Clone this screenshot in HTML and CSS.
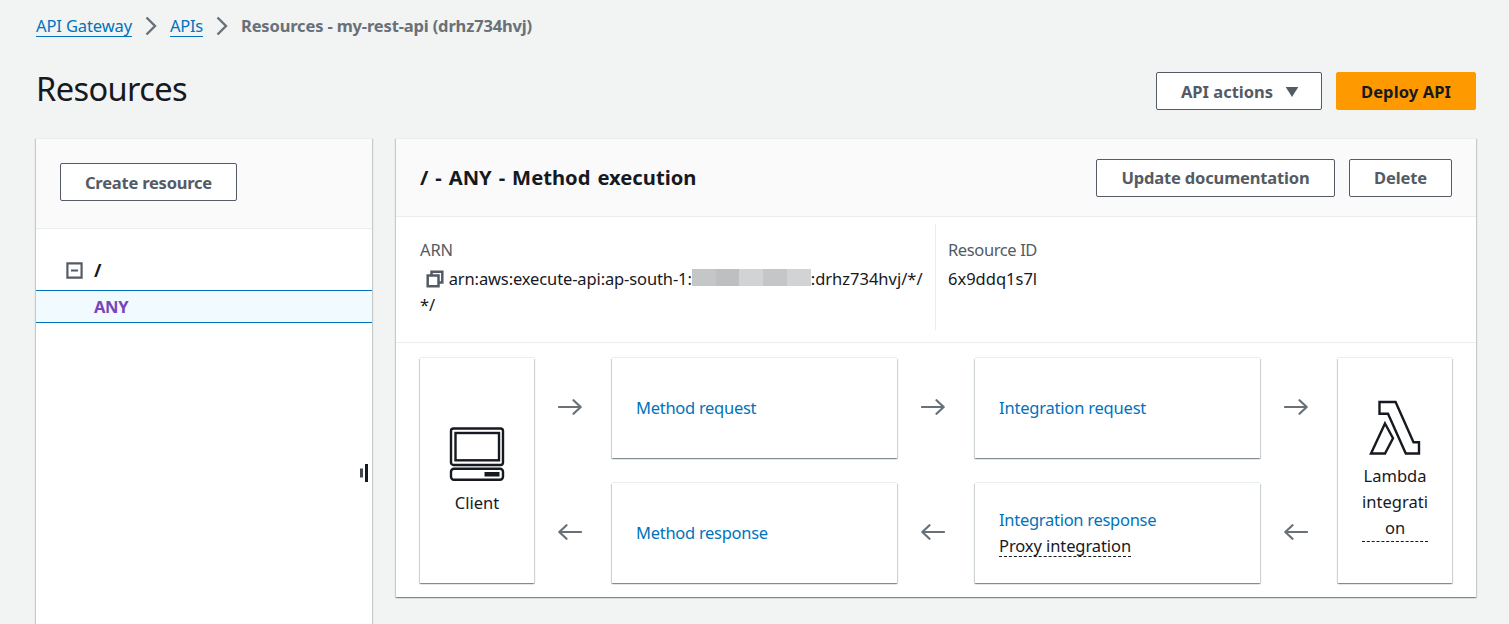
FILE: index.html
```
<!DOCTYPE html>
<html lang="en">
<head>
<meta charset="utf-8">
<title>Resources</title>
<link rel="stylesheet" href="styles.css">
</head>
<body>
<nav class="breadcrumbs">
  <a class="crumb">API Gateway</a>
  <svg class="chevron" viewBox="0 0 12 20"><path d="M1.5 1.5 10 10 1.5 18.5"/></svg>
  <a class="crumb crumb-apis">APIs</a>
  <svg class="chevron chevron-last" viewBox="0 0 12 20"><path d="M1.5 1.5 10 10 1.5 18.5"/></svg>
  <span class="crumb-current">Resources - my-rest-api (drhz734hvj)</span>
</nav>
<header class="page-header">
  <h1>Resources</h1>
  <div class="actions">
    <button class="btn btn-menu">API actions<svg class="caret" viewBox="0 0 14 12"><path d="M.7 1H13.3L7 11Z"/></svg></button>
    <button class="btn btn-primary">Deploy API</button>
  </div>
</header>
<main class="columns">
  <aside class="panel sidebar">
    <div class="sidebar-header"><button class="btn btn-create">Create resource</button></div>
    <div class="tree">
      <div class="tree-root">
        <svg class="toggle" viewBox="0 0 18 18"><path d="M1.5 1.5h15v15h-15zM5.3 9h7.4"/></svg>
        <span class="root-name">/</span>
      </div>
      <div class="tree-item">ANY</div>
    </div>
    <svg class="resizer" viewBox="0 0 8 18"><path class="grip-short" d="M1.5 4.5v9"/><path d="M6.5 0v18"/></svg>
  </aside>
  <section class="panel content">
    <div class="content-header">
      <h2>/ - ANY - Method execution</h2>
      <div class="actions">
        <button class="btn btn-update">Update documentation</button>
        <button class="btn btn-delete">Delete</button>
      </div>
    </div>
    <div class="details">
      <div class="detail detail-arn">
        <div class="label">ARN</div>
        <div class="arn-line"><svg class="copy" viewBox="0 0 18 18"><path d="M1.7 5.5h10.8v10.8h-10.8zM5.5 5V1.7h10.8v10.8H13"/></svg><span class="arn-prefix">arn:aws:execute-api:ap-south-1:</span><span class="redacted"><i></i><i></i><i></i><i></i><i></i></span><span class="arn-suffix">:drhz734hvj/*/</span></div>
        <div>*/</div>
      </div>
      <div class="detail">
        <div class="label label-id">Resource ID</div>
        <div class="resource-id">6x9ddq1s7l</div>
      </div>
    </div>
    <div class="flow">
      <div class="card endpoint">
        <svg class="client-icon" viewBox="0 0 56 54"><rect x="2" y="1.5" width="52" height="36.5" rx="2.5"/><rect x="6.5" y="6" width="43.5" height="27.3"/><rect x="2" y="41.7" width="52" height="11" rx="3"/><path class="solid" d="M35.5 45h15v4.5h-15z"/></svg>
        <span>Client</span>
      </div>
      <svg class="arrow" viewBox="0 0 24 16"><path d="M1 8h21.5M15.5 1.2 22.7 8l-7.2 6.8"/></svg>
      <div class="card step"><a>Method request</a></div>
      <svg class="arrow" viewBox="0 0 24 16"><path d="M1 8h21.5M15.5 1.2 22.7 8l-7.2 6.8"/></svg>
      <div class="card step"><a class="integration-link">Integration request</a></div>
      <svg class="arrow" viewBox="0 0 24 16"><path d="M1 8h21.5M15.5 1.2 22.7 8l-7.2 6.8"/></svg>
      <div class="card endpoint endpoint-lambda">
        <svg class="lambda-icon" viewBox="0 0 52 56"><path d="M10.5 2H26.6L44.5 42.3H50V53.5H36.8L19 13.7H10.5ZM16 23.5 24 38.2 16 53.5H2Z"/></svg>
        <span class="lambda-label">Lambda integration</span>
      </div>
      <svg class="arrow" viewBox="0 0 24 16"><path d="M23 8H1.5M8.5 1.2 1.3 8l7.2 6.8"/></svg>
      <div class="card step"><a>Method response</a></div>
      <svg class="arrow" viewBox="0 0 24 16"><path d="M23 8H1.5M8.5 1.2 1.3 8l7.2 6.8"/></svg>
      <div class="card step step-proxy"><a>Integration response</a><span class="proxy">Proxy integration</span></div>
      <svg class="arrow" viewBox="0 0 24 16"><path d="M23 8H1.5M8.5 1.2 1.3 8l7.2 6.8"/></svg>
    </div>
  </section>
</main>
</body>
</html>
```
FILE: styles.css
```
* { box-sizing: border-box; }
body {
  margin: 0;
  height: 624px;
  overflow: hidden;
  padding: 0 33px 0 36px;
  background: #f2f3f3;
  color: #16191f;
  font: 16.5px/26.4px "Noto Sans", sans-serif;
}
svg { display: block; flex: none; fill: none; }

.breadcrumbs { display: flex; align-items: center; height: 52px; white-space: nowrap; }
.crumb { color: #0073bb; line-height: 21px; border-bottom: 1px solid #0073bb; letter-spacing: -0.115px; }
.crumb-apis { letter-spacing: -0.258px; }
.crumb-current { color: #687078; font-weight: 700; letter-spacing: -0.159px; }
.chevron { width: 12px; height: 20px; margin: 0 13.5px 0 12.5px; stroke: #687078; stroke-width: 2.4; }
.chevron-last { margin: 0 13px; }

.page-header { display: flex; justify-content: space-between; height: 86px; padding-top: 20px; }
h1 { margin: 0; font-size: 32.6px; line-height: 34px; font-weight: 400; letter-spacing: -0.6px; }

.actions { display: flex; gap: 14px; }
.btn {
  display: flex;
  align-items: center;
  justify-content: center;
  height: 38px;
  padding: 1px 0 0;
  border: 1px solid #545b64;
  border-radius: 2px;
  background: #fff;
  color: #545b64;
  font: 700 16.5px/26px "Noto Sans", sans-serif;
  white-space: nowrap;
}
.btn-menu { width: 166px; padding-left: 2px; }
.btn-primary { width: 140px; background: #f90; border-color: #f90; color: #16191f; letter-spacing: 0.094px; }
.btn-create { width: 177px; letter-spacing: -0.221px; }
.btn-update { width: 239px; padding-top: 0; letter-spacing: -0.167px; }
.btn-delete { width: 103px; padding-top: 0; letter-spacing: -0.12px; }
.caret { width: 14px; height: 12px; margin-left: 12px; fill: #545b64; }

.columns { display: flex; gap: 24px; align-items: flex-start; }
.panel {
  border-top: 1px solid #eaeded;
  background: #fff;
  box-shadow: 0 1px 1px rgba(0, 28, 36, .3), 1px 1px 1px rgba(0, 28, 36, .15), -1px 1px 1px rgba(0, 28, 36, .15);
}
.sidebar { flex: none; width: 336px; height: 486px; position: relative; }
.sidebar-header { height: 90px; padding: 24px; background: #fafafa; border-bottom: 1px solid #eaeded; }
.tree { padding-top: 28px; font-weight: 700; }
.tree-root { display: flex; align-items: center; height: 33px; padding: 0 0 7px 30px; gap: 11px; }
.toggle { width: 17px; height: 17px; stroke: #545b64; stroke-width: 2.3; }
.root-name { font-size: 18px; }
.tree-item {
  height: 33px;
  padding-left: 58px;
  border: solid #0073bb;
  border-width: 1px 0;
  background: #f1faff;
  color: #7746ba;
  line-height: 32px;
  letter-spacing: -0.3px;
}
.resizer { position: absolute; left: 324px; top: 325px; width: 8px; height: 18px; stroke: #16191f; stroke-width: 3; }
.grip-short { stroke: #414750; }

.content { flex: 1; height: 459px; }
.content-header {
  display: flex;
  justify-content: space-between;
  height: 78px;
  padding: 20px 24px 0;
  background: #fafafa;
  border-bottom: 1px solid #eaeded;
}
h2 { margin: 0; font-size: 20.2px; line-height: 37px; word-spacing: 1.7px; }

.details { display: flex; height: 126px; padding: 7px 0 12px; border-bottom: 1px solid #eaeded; }
.detail { padding: 13px 12px 0; white-space: nowrap; }
.detail-arn { width: 540px; padding-left: 24px; border-right: 1px solid #eaeded; }
.label { height: 29px; color: #545b64; letter-spacing: -0.12px; }
.label-id { letter-spacing: -0.391px; }
.arn-line { display: flex; align-items: center; padding-left: 5.5px; }
.copy { width: 18px; height: 18px; margin-right: 5.2px; stroke: #545b64; stroke-width: 2.5; }
.arn-prefix { letter-spacing: -0.123px; }
.redacted { display: flex; width: 119px; height: 17px; margin-bottom: 4px; }
.redacted i { flex: 1; background: #c5c6c8; }
.redacted i:nth-child(2) { background: #bebfc1; }
.redacted i:nth-child(odd):not(:first-child) { background: #d2d3d5; }

.flow {
  display: grid;
  grid-template-columns: 114px 78px 285px 78px 285px 78px 114px;
  grid-template-rows: 100px 100px;
  row-gap: 25px;
  align-items: center;
  padding: 15px 24px 0;
}
.card {
  height: 100%;
  display: flex;
  flex-direction: column;
  justify-content: center;
  background: #fff;
  box-shadow: 0 -1px 0 #eaeded, 0 1px 1px rgba(0, 28, 36, .3), 1px 1px 1px rgba(0, 28, 36, .15), -1px 1px 1px rgba(0, 28, 36, .15);
}
.endpoint { height: 225px; grid-row: span 2; align-items: center; padding-top: 2px; }
.endpoint-lambda { padding-top: 0; }
.step { align-items: flex-start; padding-left: 24px; }
.step-proxy { padding-bottom: 2px; }
.step a { color: #0073bb; letter-spacing: -0.28px; }
.step .integration-link { letter-spacing: -0.2px; }
.proxy { border-bottom: 1px dashed #16191f; line-height: 24px; height: 23px; letter-spacing: -0.092px; }
.arrow { width: 24px; height: 16px; margin: 0 0 2px 24px; stroke: #687078; stroke-width: 2.2; stroke-linecap: round; stroke-linejoin: round; }
.client-icon { width: 56px; height: 54px; margin-bottom: 9px; stroke: #16191f; stroke-width: 2.4; }
.client-icon .solid { fill: #16191f; stroke: none; }
.lambda-icon { width: 52px; height: 56px; margin-bottom: 7px; stroke: #16191f; stroke-width: 2.4; }
.lambda-label { width: 66px; height: 79px; text-align: center; overflow-wrap: anywhere; border-bottom: 1px dashed #16191f; }
```
